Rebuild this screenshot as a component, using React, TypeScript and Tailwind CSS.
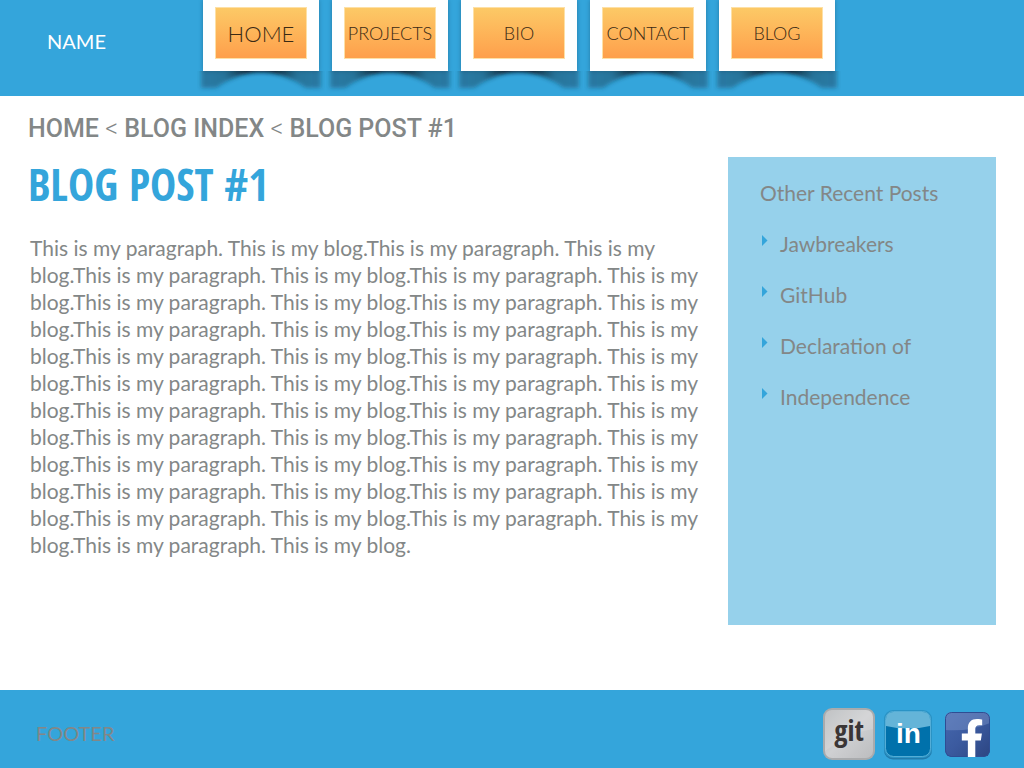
import React from "react";
import { FaFacebookF } from "react-icons/fa";

const navItems = [
  { label: "HOME", size: "text-[22px]" },
  { label: "PROJECTS", size: "text-[18px]" },
  { label: "BIO", size: "text-[18px]" },
  { label: "CONTACT", size: "text-[18px]" },
  { label: "BLOG", size: "text-[18px]" },
];

const recentPosts = ["Jawbreakers", "GitHub", "Declaration of", "Independence"];

const sentence = "This is my paragraph. This is my blog.";
const body = sentence.repeat(23);

function CardShadow({ id }: { id: string }) {
  return (
    <svg viewBox="0 0 128 24" className="-mx-1.5 h-6 w-32" aria-hidden="true">
      <defs>
        <filter id={`${id}-blur`} x="-10%" y="-30%" width="120%" height="160%">
          <feGaussianBlur stdDeviation="2" />
        </filter>
        <linearGradient id={`${id}-fade`} x1="0" x2="1" y1="0" y2="0">
          <stop offset="0" stopColor="#123a50" stopOpacity="0.4" />
          <stop offset="0.2" stopColor="#123a50" stopOpacity="0.46" />
          <stop offset="0.38" stopColor="#0a1e2a" stopOpacity="0.95" />
          <stop offset="0.62" stopColor="#0a1e2a" stopOpacity="0.95" />
          <stop offset="0.8" stopColor="#123a50" stopOpacity="0.46" />
          <stop offset="1" stopColor="#123a50" stopOpacity="0.4" />
        </linearGradient>
      </defs>
      <path
        d="M4 -8H124V17H109Q64 -15 19 17H4Z"
        fill={`url(#${id}-fade)`}
        filter={`url(#${id}-blur)`}
      />
    </svg>
  );
}

function NavCard({ label, size }: { label: string; size: string }) {
  return (
    <li className="flex w-[116px] flex-col">
      <div className="bg-white px-3 pt-[7px] pb-3 shadow-[0_0_4px_rgba(20,70,100,0.45)]">
        <a
          href="#"
          className={`flex h-[52px] items-center justify-center border border-[#fde0a6] bg-linear-to-b from-[#fcc966] to-[#fe9f4b] font-['Lato'] font-light whitespace-nowrap text-[#3a2a14] ${size}`}
        >
          {label}
        </a>
      </div>
      <CardShadow id={`shadow-${label.toLowerCase()}`} />
    </li>
  );
}

function GitIcon() {
  return (
    <svg viewBox="0 0 54 54" className="size-[54px]" aria-hidden="true">
      <defs>
        <linearGradient id="git-face" x1="0" y1="0" x2="1" y2="1">
          <stop offset="0" stopColor="#b9bbbd" />
          <stop offset="0.5" stopColor="#cfd0d2" />
          <stop offset="1" stopColor="#bcbdbf" />
        </linearGradient>
      </defs>
      <rect x="1" y="1" width="52" height="52" rx="9" fill="#a9abad" />
      <rect x="3" y="3" width="48" height="48" rx="7" fill="url(#git-face)" />
      <path d="M10 3H44Q51 3 51 10V22Q26 26 3 44V10Q3 3 10 3Z" fill="#fff" opacity="0.12" />
      <text x="27" y="34" textAnchor="middle" fontFamily="Open Sans Condensed, Noto Sans Condensed, Open Sans, sans-serif" fontWeight="700" fontSize="29" fill="#3b3636">
        git
      </text>
    </svg>
  );
}

function LinkedInIcon() {
  return (
    <svg viewBox="0 0 48 48" className="size-12 overflow-visible" aria-hidden="true">
      <rect x="0" y="1.5" width="48" height="48" rx="9" fill="#1a6a98" opacity="0.7" />
      <rect width="48" height="48" rx="9" fill="#2a93c5" />
      <rect x="2" y="2" width="44" height="44" rx="7" fill="#0071ab" />
      <path d="M9 2H39Q46 2 46 9V16Q24 21 2 16V9Q2 2 9 2Z" fill="#64b4d8" />
      <rect x="1.5" y="1.5" width="45" height="45" rx="8" fill="none" stroke="#54add6" strokeWidth="1" />
      <text x="24.5" y="33" textAnchor="middle" fontFamily="Liberation Sans, sans-serif" fontWeight="700" fontSize="28" fill="#fff">
        in
      </text>
    </svg>
  );
}

function FacebookIcon() {
  return (
    <span className="relative flex size-[45px] items-end justify-end overflow-hidden rounded-md pr-1.5">
      <svg viewBox="0 0 45 45" className="absolute inset-0 size-[45px]" aria-hidden="true">
        <defs>
          <linearGradient id="fb-face" x1="0" y1="0" x2="1" y2="1">
            <stop offset="0" stopColor="#4668ae" />
            <stop offset="0.5" stopColor="#3b5a9f" />
            <stop offset="1" stopColor="#2c4581" />
          </linearGradient>
        </defs>
        <rect width="45" height="45" rx="6" fill="url(#fb-face)" />
        <path d="M6 0H39Q45 0 45 6V11Q24 20 0 18V6Q0 0 6 0Z" fill="#9ab4df" opacity="0.3" />
        <rect x="0.5" y="0.5" width="44" height="44" rx="6" fill="none" stroke="#2f4d93" />
      </svg>
      <FaFacebookF className="relative h-[38px] w-6 text-white" aria-hidden="true" />
    </span>
  );
}

export default function App() {
  return (
    <div className="flex min-h-screen flex-col bg-white font-['Lato','Open_Sans',sans-serif] text-[20px] text-[#838787]">
      <header className="flex h-24 bg-[#34a5db]">
        <div className="w-[203px] shrink-0 pt-7 pl-[47px] leading-[26px] text-white">NAME</div>
        <nav aria-label="Main">
          <ul className="flex gap-[13px]">
            {navItems.map((item) => (
              <NavCard key={item.label} {...item} />
            ))}
          </ul>
        </nav>
      </header>

      <main className="flex-1 px-7 pt-[17px] pb-16">
        <nav aria-label="Breadcrumb" className="font-['Roboto'] text-[25px] leading-8 font-medium">
          <a href="#">HOME</a> <span className="font-light">&lt;</span> <a href="#">BLOG INDEX</a>{" "}
          <span className="font-light">&lt;</span> <span>BLOG POST #1</span>
        </nav>
        <div className="flex items-start gap-6 pt-3">
          <article className="min-w-0 flex-1">
            <h1 className="font-['Noto_Sans_ExtraCondensed','Open_Sans_Condensed','Roboto_Condensed',sans-serif] text-[44px] leading-[54px] font-bold text-[#34a5db]">
              BLOG POST #1
            </h1>
            <p className="pt-[23px] pl-0.5 text-[21px] leading-[27px]">{body}</p>
          </article>
          <aside className="min-h-[468px] w-[268px] shrink-0 bg-[#96d1eb] px-8 pt-[22px] text-[21px]">
            <h2 className="leading-[27px]">Other Recent Posts</h2>
            <ul className="flex flex-col gap-6 pt-6">
              {recentPosts.map((post) => (
                <li key={post} className="flex gap-3 leading-[27px]">
                  <svg viewBox="0 0 8 12" className="mt-1 h-3 w-2 fill-[#34a5db]" aria-hidden="true">
                    <path d="M2 1L7.5 6.5L2 12Z" />
                  </svg>
                  <a href="#">{post}</a>
                </li>
              ))}
            </ul>
          </aside>
        </div>
      </main>

      <footer className="flex h-[78px] items-center justify-between bg-[#34a5db] pr-[34px] pl-9">
        <span className="pt-2">FOOTER</span>
        <div className="flex items-center gap-2 pt-2.5">
          <a href="#" aria-label="Git">
            <GitIcon />
          </a>
          <a href="#" aria-label="LinkedIn" className="pr-[5px]">
            <LinkedInIcon />
          </a>
          <a href="#" aria-label="Facebook">
            <FacebookIcon />
          </a>
        </div>
      </footer>
    </div>
  );
}
